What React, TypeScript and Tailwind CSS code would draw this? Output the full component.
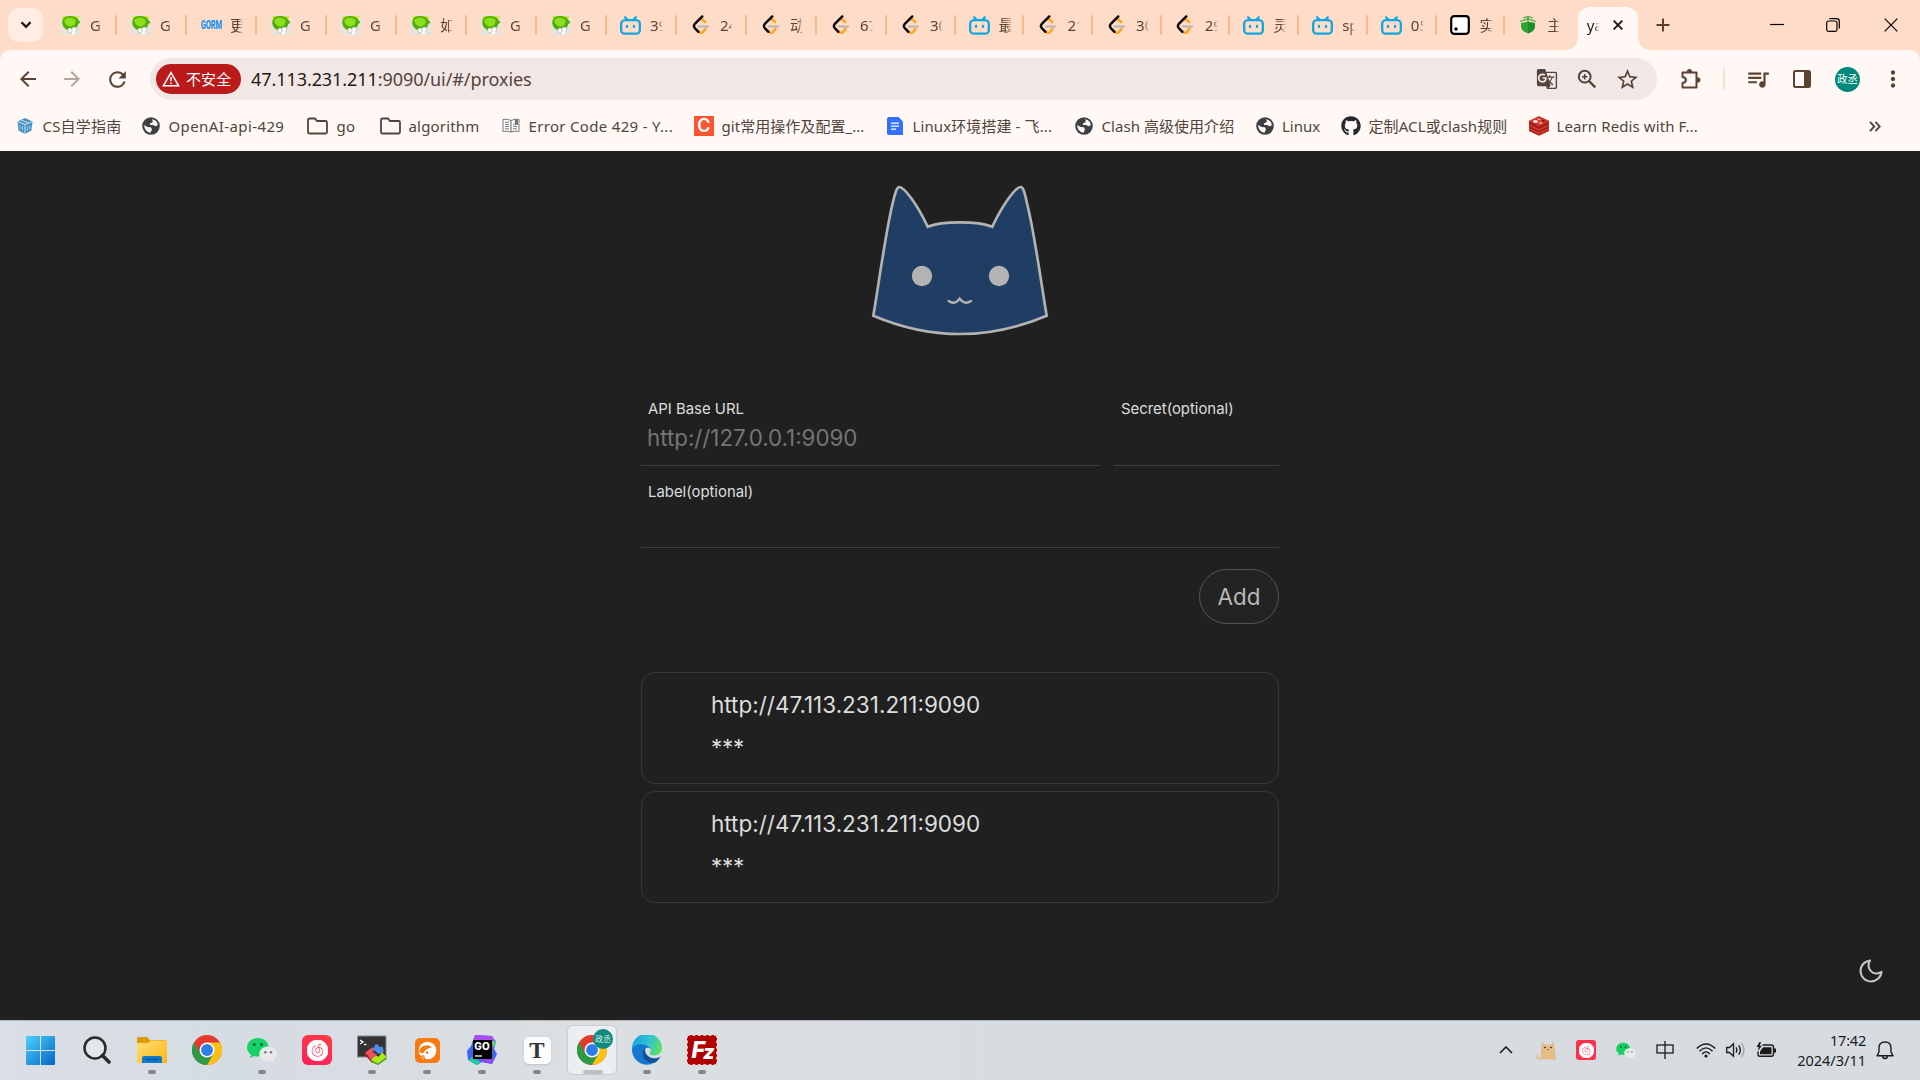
import type { ReactNode } from "react";
import { SiBilibili, SiNeteasecloudmusic } from "react-icons/si";
import { FaGithub } from "react-icons/fa";
import {
  MdGTranslate,
  MdOutlineQueueMusic,
  MdStarBorder,
  MdMoreVert,
  MdArrowBack,
  MdArrowForward,
  MdRefresh,
} from "react-icons/md";

/* ---------- favicons ---------- */

const Frog = () => (
  <svg viewBox="0 0 20 20" className="size-5 shrink-0">
    <rect width="20" height="20" fill="#e6e2dc" />
    <path d="M1 1 L19 1 L16 5 L3 5Z" fill="#e3e53a" />
    <path d="M2 4 Q4 .8 9.500 1 Q16 1.500 17.500 5 L19.500 7.500 L17.300 9 Q16 14.500 10 16 Q3 15 1.300 9 Q.8 6 2 4Z" fill="#4fae0c" />
    <path d="M3 5 Q9 0 14.500 5 Q15.500 10 10 11.500 Q4 11 3 5Z" fill="#8fe01c" />
    <circle cx="9" cy="15.300" r="2.300" fill="#fff" stroke="#9aa88e" strokeWidth=".5" />
    <circle cx="13.300" cy="14.500" r="2.500" fill="#fff" stroke="#9aa88e" strokeWidth=".5" />
    <circle cx="12.500" cy="17.800" r="1.700" fill="#fff" />
  </svg>
);

const Gorm = () => (
  <span className="block w-5 shrink-0 origin-left scale-x-[0.62] whitespace-nowrap font-['Roboto',sans-serif] text-[12px] font-black leading-5 tracking-[-0.2px] text-[#1e90f5]">
    GORM
  </span>
);

const Bili = () => <SiBilibili className="size-[21px] shrink-0 text-[#11a8e0]" />;

const Leet = () => (
  <svg viewBox="0 0 20 20" className="size-5 shrink-0" fill="none" strokeLinecap="round" strokeLinejoin="round">
    <path d="M14.500 13.800 L12.300 16.800 Q10.200 19 8 16.800 L6.500 15.300" stroke="#fca31c" strokeWidth="2.400" />
    <path d="M9.500 4.600 Q11 3.800 12.200 5.200 L14.200 7.200" stroke="#fca31c" strokeWidth="2.400" />
    <path d="M11.300 1.400 L3.600 9.200 Q2.200 11 3.600 12.800 L7.400 16.800" stroke="#0a0a0a" strokeWidth="2.400" />
    <path d="M8 11.500 H17" stroke="#b3b3b3" strokeWidth="2.200" />
  </svg>
);

const BoxDot = () => (
  <svg viewBox="0 0 20 20" className="size-5 shrink-0">
    <rect x="1.200" y="1.200" width="17.600" height="17.600" rx="3" fill="#fff" stroke="#000" strokeWidth="2.200" />
    <circle cx="6" cy="14" r="1.700" />
  </svg>
);

const Shield = () => (
  <svg viewBox="0 0 20 20" className="size-5 shrink-0">
    <path d="M3 8 L10 6.500 L17 8 V12 Q16 16.500 10 18.500 Q4 16.500 3 12Z" fill="#2fa52f" />
    <path d="M10 1 V7 M5 3 L10 1.500 L15 3 M2 6.500 L10 3.800 L18 6.500" stroke="#4dac45" strokeWidth="1.300" fill="none" />
    <path d="M10 7 L17 8 V12 Q16 16.500 10 18.500Z" fill="#1f8f2d" />
  </svg>
);

type TabData = [() => ReactNode, string];
const wideTabs: TabData[] = [
  [Frog, "G"], [Frog, "G"], [Gorm, "更"], [Frog, "G"], [Frog, "G"], [Frog, "如"],
  [Frog, "G"], [Frog, "G"], [Bili, "39"], [Leet, "24"], [Leet, "动"], [Leet, "67"],
];
const narrowTabs: TabData[] = [
  [Leet, "30"], [Bili, "最"], [Leet, "21"], [Leet, "30"], [Leet, "29"],
  [Bili, "灵"], [Bili, "sp"], [Bili, "05"], [BoxDot, "实"],
];

const tabLabel =
  "w-[13px] overflow-hidden whitespace-nowrap text-[15px] leading-5 text-[#5b4334] [mask-image:linear-gradient(to_right,#000_60%,transparent)]";

function Tab({ icon: Icon, label, narrow }: { icon: () => ReactNode; label: string; narrow?: boolean }) {
  return (
    <div className={`flex h-5 shrink-0 items-center pl-[13px] ${narrow ? "w-[68.7px]" : "w-[70px]"}`}>
      <span className="flex w-[21px] shrink-0 justify-center"><Icon /></span>
      <span className={`ml-[9px] ${tabLabel}`}>{label}</span>
      <span className="ml-auto h-5 w-[2px] shrink-0 rounded-full bg-[#ffb788]" />
    </div>
  );
}

function TabStrip() {
  return (
    <div className="flex h-[50px] items-center bg-[#ffdcc8]">
      <div className="ml-2 flex h-[34px] w-[35px] items-center justify-center rounded-[11px] bg-[#ffede3]">
        <svg viewBox="0 0 12 8" className="h-2 w-3" fill="none" stroke="#1d1410" strokeWidth="2.300">
          <path d="M1.500 1.200 L6 5.800 L10.500 1.200" />
        </svg>
      </div>
      <div className="ml-[4px] flex">
        {wideTabs.map(([I, l], i) => <Tab key={i} icon={I} label={l} />)}
        {narrowTabs.map(([I, l], i) => <Tab key={i} icon={I} label={l} narrow />)}
        <div className="flex h-5 w-[72.5px] items-center pl-[13px]">
          <Shield />
          <span className={`ml-[9px] ${tabLabel}`}>主</span>
        </div>
      </div>
      <div className="relative mt-[7px] flex h-[43px] w-[60.5px] items-center rounded-t-[12px] bg-[#fff8f5] pb-[7px] pl-[9px]">
        <span className="absolute -left-3 bottom-0 size-3 bg-[radial-gradient(circle_at_0_0,transparent_11.5px,#fff8f5_12px)]" />
        <span className="absolute -right-3 bottom-0 size-3 bg-[radial-gradient(circle_at_100%_0,transparent_11.5px,#fff8f5_12px)]" />
        <span className="w-[13px] overflow-hidden text-[15px] leading-5 text-[#1f1a17] [mask-image:linear-gradient(to_right,#000_50%,transparent)]">ya</span>
        <svg viewBox="0 0 10 10" className="ml-[13px] size-[10px]" stroke="#1d1410" strokeWidth="1.900">
          <path d="M.7 .7 L9.300 9.300 M9.300 .7 L.7 9.300" />
        </svg>
      </div>
      <svg viewBox="0 0 14 14" className="ml-[18px] size-[14px]" stroke="#5b4334" strokeWidth="2">
        <path d="M7 .5 V13.500 M.5 7 H13.500" />
      </svg>
      <div className="ml-auto flex items-center">
        <svg viewBox="0 0 14 14" className="mr-[42px] size-[14px]" stroke="#000" strokeWidth="1.200">
          <path d="M0 6.500 H14" />
        </svg>
        <svg viewBox="0 0 14 14" className="mr-[44px] size-[14px]" fill="none" stroke="#000" strokeWidth="1.200">
          <rect x=".7" y="3" width="10.300" height="10.300" rx="1.800" />
          <path d="M3.400 .7 H10.600 Q13.300 .7 13.300 3.400 V10.600" />
        </svg>
        <svg viewBox="0 0 14 14" className="mr-[22px] size-[14px]" stroke="#000" strokeWidth="1.200">
          <path d="M.7 .7 L13.300 13.300 M13.300 .7 L.7 13.300" />
        </svg>
      </div>
    </div>
  );
}

/* ---------- toolbar ---------- */

const ZoomIcon = () => (
  <svg viewBox="0 0 20 20" className="size-5 text-[#51443c]" fill="none" stroke="currentColor">
    <circle cx="7.700" cy="7.700" r="5.900" strokeWidth="2" />
    <path d="M12 12 L18.300 18.300" strokeWidth="2.400" />
    <path d="M7.700 5 V10.400 M5 7.700 H10.400" strokeWidth="1.600" />
  </svg>
);

const Puzzle = () => (
  <svg viewBox="0 0 22 22" className="size-[22px]">
    <path d="M2.500 4.500 H16.500 V19.500 H2.500 V15 Q6 14.500 6 12 Q6 9.500 2.500 9Z" fill="none" stroke="currentColor" strokeWidth="2" strokeLinejoin="round" />
    <path d="M6.800 4 Q7 1 9.500 1 Q12 1 12.200 4Z M17 9.300 Q20.500 9.500 20.500 12 Q20.500 14.500 17 14.700Z" fill="currentColor" />
  </svg>
);

function Toolbar() {
  return (
    <div className="bg-[#ffdcc8]">
      <div className="flex h-[58px] items-center rounded-t-[10px] bg-[#fff8f5] text-[#5b4334]">
        <MdArrowBack className="ml-[16px] size-6" />
        <MdArrowForward className="ml-[20px] size-6 text-[#b3a49c]" />
        <MdRefresh className="ml-[21px] size-[25px]" />
        <div className="ml-[20px] flex h-[42px] w-[1507px] items-center rounded-full bg-[#f2e7e4]">
          <div className="ml-[6px] flex h-[30px] w-[85px] items-center rounded-full bg-[#ba1a1a] text-white">
            <svg viewBox="0 0 18 16" className="ml-[6px] h-4 w-[18px]" fill="none" stroke="#fff" strokeWidth="1.500">
              <path d="M9 1.600 L16.600 14.800 H1.400Z" />
              <path d="M9 6 V10.300 M9 11.400 V13" />
            </svg>
            <span className="ml-[6px] whitespace-nowrap text-[15px] leading-5 tracking-[0.1px]">不安全</span>
          </div>
          <span className="ml-[10px] text-[18px] leading-6 tracking-[-0.070px] text-[#51443c]">
            <span className="text-[#1f1a17]">47.113.231.211</span>:9090/ui/#/proxies
          </span>
          <MdGTranslate className="ml-auto mr-[19px] size-[22px] text-[#51443c]" />
          <span className="mr-[18px]"><ZoomIcon /></span>
          <MdStarBorder className="mr-[17px] size-[25px] text-[#51443c]" />
        </div>
        <span className="ml-[23px]"><Puzzle /></span>
        <span className="ml-[21px] h-5 w-[2px] bg-[#ffdcc8]" />
        <MdOutlineQueueMusic className="ml-[20px] size-[26px]" />
        <svg viewBox="0 0 18 18" className="ml-[22px] size-[18px]">
          <rect x="1" y="1" width="16" height="16" rx="1.500" fill="none" stroke="currentColor" strokeWidth="2" />
          <rect x="11" y="1" width="6" height="16" fill="currentColor" />
        </svg>
        <span className="ml-[24px] flex size-[25px] items-center justify-center whitespace-nowrap rounded-full bg-[#00897b] text-[10.5px] leading-none text-white">
          政丞
        </span>
        <MdMoreVert className="ml-[20px] size-[26px]" />
      </div>
    </div>
  );
}

/* ---------- bookmarks ---------- */

const Globe = () => (
  <svg viewBox="0 0 18 18" className="size-[18px]">
    <circle cx="9" cy="9" r="8.800" fill="#3c4043" />
    <path d="M10 2.200 Q15.500 3.400 15.800 8.200 L13.300 9.300 L11.300 8 H8.200 L8 6.200 L10.300 5.600 L10.800 4Z" fill="#fff8f5" />
    <path d="M2.100 8 L5.500 10 L8.800 10.300 L10 12.200 L8.500 15.700 Q2.500 15 2.100 8Z" fill="#fff8f5" />
  </svg>
);
const Folder = () => (
  <svg viewBox="0 0 21 18" className="h-[18px] w-[21px] shrink-0">
    <path d="M1 3 Q1 1.500 2.500 1.500 H8 L10 4 H18.500 Q20 4 20 5.500 V15 Q20 16.500 18.500 16.500 H2.500 Q1 16.500 1 15Z" fill="none" stroke="#51443c" strokeWidth="1.800" />
  </svg>
);
const Cube = () => (
  <svg viewBox="0 0 16 18" className="h-[18px] w-4">
    <path d="M8 1 L15.500 4.500 L14.500 13.500 L8 17 L1.500 13.500 L.5 4.500Z" fill="#4b93c4" />
    <path d="M.8 4.700 L8 7.500 L15.200 4.700 M8 7.500 V17 M4 3 L11.500 6" stroke="#d4e8f4" strokeWidth=".9" fill="none" />
    <path d="M3 8.500 V12 M5.500 9.500 V13 M10.500 9.500 V13.500 M13 8.500 V12" stroke="#a5cfe6" strokeWidth="1" />
  </svg>
);
const Book = () => (
  <svg viewBox="0 0 18 16" className="h-4 w-[18px]" fill="#fff" stroke="#777" strokeWidth="1">
    <path d="M1 1.500 Q5 .5 9 2.500 V14 Q5 12.500 1 13.500Z" />
    <path d="M17 1.500 Q13 .5 9 2.500 V14 Q13 12.500 17 13.500Z" />
    <path d="M3 4.200 H7 M3 6.400 H7 M3 8.600 H7 M3 10.800 H7 M11 8.600 H15 M11 10.800 H15 M11 6.400 H12.500" />
    <path d="M13.300 2 V7 L14.500 6 L15.500 7 V2Z" fill="#666" />
  </svg>
);
const CIcon = () => (
  <span className="flex size-5 items-center justify-center bg-[#fc5531] font-['Inter',sans-serif] text-[18px] font-semibold leading-none text-white">C</span>
);
const Doc = () => (
  <svg viewBox="0 0 16 18" className="h-[18px] w-4">
    <path d="M2 0 H11.500 L16 4.500 V18 H2 Q0 18 0 16 V2 Q0 0 2 0Z" fill="#3370ff" />
    <path d="M4 6.200 H12 M4 9.200 H12 M4 12.200 H9" stroke="#fff" strokeWidth="1.300" />
  </svg>
);
const Redis = () => (
  <svg viewBox="0 0 20 20" className="size-5">
    <path d="M0 5 L10 .3 L20 5 V15 L10 19.700 L0 15Z" fill="#a3211b" />
    <path d="M0 12 L10 16.500 L20 12 V13.500 L10 18 L0 13.500Z" fill="#dc3a31" />
    <path d="M0 8.500 L10 13 L20 8.500 V10 L10 14.500 L0 10Z" fill="#dc3a31" />
    <path d="M0 5 L10 .3 L20 5 L10 10.300Z" fill="#d8352c" />
    <ellipse cx="6.500" cy="5.500" rx="2.500" ry="1.300" fill="#fff" />
    <path d="M8.500 2.500 L12 3.500 L9.500 4Z M10 7.800 L11.500 6 L13.500 7.200Z" fill="#fff" />
    <path d="M13.500 3.500 L16.500 5 L13.500 6Z" fill="#7a0c00" />
  </svg>
);
const Octo = () => <FaGithub className="size-5 text-[#24292f]" />;

const bookmarks: { icon: () => ReactNode; label: string; cls: string; t: string }[] = [
  { icon: Cube, label: "CS自学指南", cls: "w-[126px]", t: "tracking-[0.2px]" },
  { icon: Globe, label: "OpenAI-api-429", cls: "w-[166px]", t: "tracking-[0.4px]" },
  { icon: Folder, label: "go", cls: "w-[73px] gap-[10px]", t: "tracking-[0.2px]" },
  { icon: Folder, label: "algorithm", cls: "w-[121px] gap-[9px]", t: "tracking-[0.17px]" },
  { icon: Book, label: "Error Code 429 - Y...", cls: "w-[193px]", t: "tracking-[0.32px]" },
  { icon: CIcon, label: "git常用操作及配置_...", cls: "w-[191px]", t: "tracking-[0.05px]" },
  { icon: Doc, label: "Linux环境搭建 - 飞...", cls: "w-[189px]", t: "tracking-[0.1px]" },
  { icon: Globe, label: "Clash 高级使用介绍", cls: "w-[180.5px]", t: "tracking-[0.05px]" },
  { icon: Globe, label: "Linux", cls: "w-[86.5px]", t: "" },
  { icon: Octo, label: "定制ACL或clash规则", cls: "w-[188px]", t: "tracking-[0.1px]" },
  { icon: Redis, label: "Learn Redis with F...", cls: "w-[190px]", t: "tracking-[0.1px]" },
];

function Bookmarks() {
  return (
    <div className="flex h-[43px] items-center bg-[#fff8f5] pb-[7px] pl-[15px] pt-0 text-[15px] leading-5 text-[#51443c]">
      {bookmarks.map(({ icon: I, label, cls, t }) => (
        <div key={label} className={`flex shrink-0 items-center gap-2 ${cls}`}>
          <span className="flex w-5 shrink-0 items-center justify-center"><I /></span>
          <span className={`-ml-[0.5px] whitespace-nowrap ${t}`}>{label}</span>
        </div>
      ))}
      <svg viewBox="0 0 12 11" className="ml-auto mr-[39px] h-[11px] w-3" fill="none" stroke="#51443c" strokeWidth="1.900">
        <path d="M1 .8 L5.300 5.500 L1 10.200 M6.500 .8 L10.800 5.500 L6.500 10.200" />
      </svg>
    </div>
  );
}

/* ---------- page ---------- */

function CatLogo() {
  return (
    <svg viewBox="0 0 600 540" className="mt-[19px] h-[180px] w-[200px]">
      <path
        d="M40 437 C58 330 78 180 98 100 C107 62 111 51 118 51 C132 51 170 100 203 170 Q235 157 300 157 Q365 157 397 170 C430 100 468 51 482 51 C489 51 493 62 501 100 C522 180 542 330 560 437 Q430 492 300 492 Q170 492 40 437Z"
        fill="#203e63" stroke="#b3b3b3" strokeWidth="8"
      />
      <circle cx="186" cy="318" r="30.500" fill="#b3b3b3" />
      <circle cx="417" cy="318" r="30.500" fill="#b3b3b3" />
      <path d="M266 393 Q285 406 299 386 Q314 406 333 393" fill="none" stroke="#b3b3b3" strokeWidth="7" strokeLinecap="round" />
    </svg>
  );
}

function Field({ label, placeholder, className }: { label: string; placeholder?: string; className: string }) {
  return (
    <div className={`flex flex-col border-b border-[#3f3f3f] ${className}`}>
      <span className="ml-[7px] pt-px text-[14.9px] leading-5 text-[#dddddd]">{label}</span>
      <span className="ml-[6px] mt-[5px] h-7 text-[22.3px] leading-7 text-[#757575]">{placeholder}</span>
    </div>
  );
}

function Backend({ url }: { url: string }) {
  return (
    <div className="h-[112px] rounded-[14px] border border-[#363636] pl-[69px] pt-[18px] text-[22.5px] text-[#dddddd]">
      <div className="leading-[28px]">{url}</div>
      <div className="mt-[15px] leading-[28px] tracking-[-0.3px]">***</div>
    </div>
  );
}

function Page() {
  return (
    <main className="relative flex h-[869px] flex-col items-center bg-[#202020] font-['Inter',sans-serif]">
      <CatLogo />
      <div className="mt-[48px] w-[638px]">
        <div className="flex justify-between">
          <Field label="API Base URL" placeholder="http://127.0.0.1:9090" className="h-[68px] w-[459px]" />
          <Field label="Secret(optional)" className="h-[68px] w-[165px]" />
        </div>
        <Field label="Label(optional)" className="mt-[15px] h-[67px]" />
        <div className="mt-[21px] flex justify-end">
          <button className="h-[55px] w-20 rounded-full border border-[#555] bg-[#232323] pt-px text-[22.4px] leading-none text-[#b9b9b9]">Add</button>
        </div>
        <div className="mt-[48px] flex flex-col gap-[7px]">
          <Backend url="http://47.113.231.211:9090" />
          <Backend url="http://47.113.231.211:9090" />
        </div>
      </div>
      <svg viewBox="0 0 24 24" className="absolute bottom-[35px] right-[35px] size-[28px]" fill="none" stroke="#c4c4c4" strokeWidth="1.800" strokeLinecap="round" strokeLinejoin="round">
        <path d="M21 12.790A9 9 0 1 1 11.210 3 7 7 0 0 0 21 12.790z" />
      </svg>
    </main>
  );
}

/* ---------- taskbar icons ---------- */

const WinLogo = () => (
  <svg viewBox="0 0 29 29" className="size-[29px]">
    <defs>
      <linearGradient id="win" x1="0" y1="0" x2="1" y2="1">
        <stop offset="0" stopColor="#4fd0fb" />
        <stop offset="1" stopColor="#0067c8" />
      </linearGradient>
    </defs>
    <path d="M1 0 H14 V14 H0 V1 Q0 0 1 0Z M15 0 H28 Q29 0 29 1 V14 H15Z M0 15 H14 V29 H1 Q0 29 0 28Z M15 15 H29 V28 Q29 29 28 29 H15Z" fill="url(#win)" />
  </svg>
);
const Search = () => (
  <svg viewBox="0 0 28 28" className="size-7" fill="none" stroke="#2a2a2a">
    <circle cx="12" cy="12" r="10.500" strokeWidth="2.500" fill="#e3e7ea" />
    <path d="M19.500 19.500 L26 26" strokeWidth="3.600" strokeLinecap="round" />
  </svg>
);
const Explorer = () => (
  <svg viewBox="0 0 30 28" className="h-7 w-[30px]">
    <defs>
      <linearGradient id="fold" x1="0" y1="0" x2="1" y2="1">
        <stop offset="0" stopColor="#ffdf75" />
        <stop offset="1" stopColor="#fbb713" />
      </linearGradient>
    </defs>
    <path d="M0 2 Q0 1 1 1 H10 L13 4 H29 V8 H0Z" fill="#dc9b08" />
    <path d="M0 7 H11 L14 4.500 H29 Q30 4.500 30 5.500 V26 Q30 27 29 27 H1 Q0 27 0 26Z" fill="url(#fold)" />
    <path d="M5 27 V22 Q5 20 7 20 H23 Q25 20 25 22 V27Z" fill="#1178cb" />
    <path d="M9 23.500 H21" stroke="#0a4f94" strokeWidth="1.200" />
  </svg>
);
const Chrome = () => (
  <svg viewBox="0 0 48 48" className="size-[30px]">
    <circle cx="24" cy="24" r="24" fill="#e23b2e" />
    <path d="M3.200 12 A24 24 0 0 0 24 48 L34.400 30 L24 24 L13.600 30Z" fill="#2c9a46" />
    <path d="M44.800 12 A24 24 0 0 1 24 48 L34.400 30 L24 12Z" fill="#fbc116" />
    <circle cx="24" cy="24" r="12" fill="#fff" />
    <circle cx="24" cy="24" r="9.500" fill="#2f7de9" />
  </svg>
);
const WeChat = ({ small }: { small?: boolean }) => (
  <svg viewBox="0 0 30 26" className={small ? "h-[17px] w-5" : "h-[26px] w-[30px]"}>
    <path d="M11 1 C4.500 1 0 5 0 10.500 C0 13.500 1.500 16 4 17.700 L3 21 L7 19 Q9 19.600 11 19.600 C17 19.600 21.500 15.500 21.500 10.300 C21.500 5 17 1 11 1Z" fill="#17d066" />
    <circle cx="7.300" cy="7.500" r="1.500" fill="#0c6b37" />
    <circle cx="14.500" cy="7.500" r="1.500" fill="#0c6b37" />
    <path d="M21 9.500 C16 9.500 12.300 13 12.300 17 C12.300 21.300 16 24.500 21 24.500 Q23 24.500 24.500 24 L27.500 25.500 L27 22.800 Q30 20.500 30 17 C30 13 26 9.500 21 9.500Z" fill="#e9e9e9" />
    <circle cx="18.300" cy="15.300" r="1.200" fill="#777" />
    <circle cx="24" cy="15.300" r="1.200" fill="#777" />
  </svg>
);
const NetEase = ({ small }: { small?: boolean }) => (
  <span className={small ? "flex size-5 items-center justify-center rounded-[3px] bg-[#fe2f4a]" : "flex size-[30px] items-center justify-center rounded-[6px] bg-[linear-gradient(20deg,#ff1f5e,#fe3c41)]"}>
    <SiNeteasecloudmusic className={small ? "size-[15px] stroke-white stroke-[1.2px] text-white" : "size-[21px] stroke-white stroke-[1px] text-white"} />
  </span>
);
const Terminal = () => (
  <svg viewBox="0 0 30 30" className="size-[30px]">
    <rect x=".5" y="1" width="28.500" height="21" fill="#333" stroke="#8c8c8c" />
    <path d="M3 5 L6 7 L3 9" stroke="#fff" strokeWidth="1.300" fill="none" />
    <path d="M7 9.500 H9.500" stroke="#fff" strokeWidth="1.300" />
    <path d="M8 17.500 L15 12.500 L17.500 15 L15.500 17 L20 19.500 L15 25Z" fill="#f0525a" />
    <path d="M8 17.500 L15 25 V28 L8 20Z" fill="#b3262c" />
    <path d="M15 13 L18 12 L17.500 10 L21 9 L22 12 L25.500 11.500 L27 16.500 L22 19 L18 16Z" fill="#4b8ff0" />
    <path d="M14 25 L19 20.500 L21.500 22 L23 20 L25 17 L29.500 22 L21 28.500Z" fill="#a6ec19" />
    <path d="M14 25 L21 28.500 L29.500 22 V24 L21 30 L14 27Z" fill="#4d9a10" />
  </svg>
);
const OrangeApp = () => (
  <svg viewBox="0 0 25 25" className="size-[25px]">
    <rect width="25" height="25" rx="5" fill="#f97a10" />
    <circle cx="12.500" cy="12.500" r="8.800" fill="#fff" />
    <path d="M4 13.500 Q6 7 12.500 7.200 Q15 7.500 17 9.500 Q11 10 8.500 15 Q6 15.500 4 13.500Z" fill="#f97a10" />
    <path d="M10.500 14.500 L13 13 V16.500Z" fill="#e8690a" />
    <path d="M5 18 L9 17 L11.500 22 Q7 22 5 18Z" fill="#f97a10" />
    <path d="M7.500 17.500 L11 20.500 M6 19 L9 21.500" stroke="#fff" strokeWidth=".7" />
  </svg>
);
const GoLand = () => (
  <span className="relative flex size-[30px] items-center justify-center">
    <svg viewBox="0 0 30 30" className="absolute inset-0">
      <path d="M8 0 L25 1 L29 7 L27 14 L30 19 L25 29 L15 27 L10 30 L1 25 L0 16 L4 11Z" fill="#3f62ef" />
      <path d="M8 0 L25 1 L27 6 L5 9Z" fill="#b04af2" />
      <path d="M1 25 L5 22 L14 27 L10 30Z" fill="#25c99a" />
      <path d="M14 24 H25 L28 23 L25 29 L15 27Z" fill="#8e4bf0" />
      <path d="M25 6 L29 7 L26 13Z" fill="#6fe04a" />
      <rect x="6" y="5" width="19" height="19" fill="#000" />
      <path d="M8 21 H15" stroke="#fff" strokeWidth="1.300" />
    </svg>
    <span className="relative -mt-[8px] font-['Inter',sans-serif] text-[10px] font-extrabold leading-none text-white">GO</span>
  </span>
);
const Typora = () => (
  <span className="flex size-[27px] items-center justify-center rounded-[5px] bg-[#fcfcfc] font-['Liberation_Serif',serif] text-[23px] font-bold leading-none text-[#333] shadow-sm">T</span>
);
const Edge = () => (
  <svg viewBox="0 0 30 30" className="size-[30px]">
    <defs>
      <linearGradient id="edgeTop" x1="0" y1="0.300" x2="1" y2="0.600">
        <stop offset="0" stopColor="#1ba0e4" />
        <stop offset=".55" stopColor="#32c5ce" />
        <stop offset="1" stopColor="#5ee35a" />
      </linearGradient>
    </defs>
    <path d="M0 14 A15 15 0 0 1 30 13 C30 18 26 20.500 22 20.500 C18 20.500 17 19 18 17.500 C20 14 17 9.500 12 9.500 C7 9.500 2 12 0 17Z" fill="url(#edgeTop)" />
    <path d="M0 15 C1 11 6 9 11 9.300 C15 9.500 18 12 18.500 14 C15 11 11 14 11 19 C11 25 17 29 22 28 A15 15 0 0 1 0 15Z" fill="#1378cf" />
    <path d="M13.500 12.500 C10 15 9.500 21 13 25 C17 29 22 28.500 24 27 Q27.500 24.500 28.500 21.500 C26 23.500 21 24 17.500 22 C13.500 19.500 12.500 16 13.500 12.500Z" fill="#10519e" />
  </svg>
);
const FileZilla = () => (
  <span className="flex size-[30px] items-center justify-center border border-dashed border-[#e7b5b5] bg-[#b10000] font-['Inter',sans-serif] text-[23px] font-extrabold italic leading-none tracking-[-2px] text-white">
    <span>F</span><span className="mt-[4px] text-[20px]">z</span>
  </span>
);
const ActiveChrome = () => (
  <span className="relative flex size-12 items-center justify-center rounded-[5px] bg-[#eceff2] shadow-[0_0_1px_1px_rgba(0,0,0,0.08)]">
    <Chrome />
    <span className="absolute right-[3px] top-[3px] flex size-5 items-center justify-center whitespace-nowrap rounded-full bg-[#0f8a7d] text-[8px] leading-none text-[#c9ebe6]">政丞</span>
  </span>
);

const apps: { icon: () => ReactNode; run: "none" | "dot" | "active" }[] = [
  { icon: Explorer, run: "dot" },
  { icon: Chrome, run: "none" },
  { icon: () => <WeChat />, run: "dot" },
  { icon: () => <NetEase />, run: "none" },
  { icon: Terminal, run: "dot" },
  { icon: OrangeApp, run: "dot" },
  { icon: GoLand, run: "dot" },
  { icon: Typora, run: "dot" },
  { icon: ActiveChrome, run: "active" },
  { icon: Edge, run: "dot" },
  { icon: FileZilla, run: "dot" },
];

const TrayCat = () => (
  <svg viewBox="0 0 20 20" className="size-5">
    <path d="M6 1 L8 4.500 H15 L17.500 1 L20 19.500 H4Z" fill="#e3bd85" />
    <path d="M5 18.500 Q0 19.500 1 14.500" stroke="#e3bd85" strokeWidth="1.500" fill="none" />
    <path d="M9 7.500 h.1 M15 7.500 h.1" stroke="#222" strokeWidth="1.600" strokeLinecap="round" />
    <path d="M11 10 L12 9 L13 10" stroke="#8a6235" strokeWidth=".7" fill="none" />
  </svg>
);

function Taskbar() {
  return (
    <footer className="flex h-[60px] items-center border-t border-[#b4b8bb] bg-[linear-gradient(to_right,#d9dfe4,#d5dce2_12%,#dbdfe2_30%,#d6dbe0_60%,#d7dce0)] pb-px text-[#1b1b1b]">
      <div className="flex w-[124.5px] shrink-0 items-center pl-[26px]">
        <WinLogo />
        <span className="ml-[28px]"><Search /></span>
      </div>
      <div className="flex">
        {apps.map(({ icon: I, run }, i) => (
          <div key={i} className="relative flex h-12 w-[55px] items-center justify-center">
            <I />
            {run === "dot" && <span className="absolute bottom-0 left-[23.500px] h-1 w-2 rounded-full bg-[#84888b]" />}
            {run === "active" && <span className="absolute bottom-0 left-[18px] h-1 w-5 rounded-full bg-[#bdbfc1]" />}
          </div>
        ))}
      </div>
      <div className="ml-auto flex items-center">
        <svg viewBox="0 0 14 8" className="mr-[23px] h-2 w-[14px]" fill="none" stroke="currentColor" strokeWidth="1.600"><path d="M1 7 L7 1 L13 7" /></svg>
        <TrayCat />
        <span className="ml-[20px]"><NetEase small /></span>
        <span className="ml-[20px]"><WeChat small /></span>
        <svg viewBox="0 0 18 18" className="ml-[20px] size-[18px]" fill="none" stroke="currentColor" strokeWidth="1.300"><rect x="1" y="4" width="16" height="8" /><path d="M9 0 V18" /></svg>
        <svg viewBox="0 0 20 15" className="ml-[22px] h-[15px] w-5" fill="none" stroke="currentColor" strokeWidth="1.400">
          <path d="M.7 5.500 Q10 -3.500 19.300 5.500 M3.500 8.300 Q10 1.500 16.500 8.300 M6.200 11 Q10 6.700 13.800 11" />
          <circle cx="10" cy="13" r="1.600" fill="currentColor" stroke="none" />
        </svg>
        <svg viewBox="0 0 20 16" className="ml-[10px] h-4 w-5" fill="none" stroke="currentColor" strokeWidth="1.300">
          <path d="M.7 5.500 H3.500 L7.500 1.700 V14.300 L3.500 10.500 H.7Z" />
          <path d="M10 5.300 Q11.800 8 10 10.700 M12.700 3.300 Q16 8 12.700 12.700" />
          <path d="M15.500 1.200 Q20.500 8 15.500 14.800" stroke="#9ea2a5" />
        </svg>
        <svg viewBox="0 0 20 16" className="ml-[10px] h-4 w-5" fill="none" stroke="currentColor" strokeWidth="1.400">
          <path d="M6.500 3 H15.500 Q17.500 3 17.500 5 V12 Q17.500 14.200 15.500 14.200 H4 Q2 14.200 2 12 V9.500" />
          <path d="M7 5.200 H15.500 V12.200 H4 V9.500Z" fill="currentColor" stroke="none" />
          <path d="M18 6.500 H20 V10.500 H18Z" fill="currentColor" stroke="none" />
          <path d="M3.500 0 L.5 5 H2.800 L1.800 9 L6 3.800 H3.800 L5 0Z" fill="currentColor" stroke="none" />
        </svg>
        <div className="ml-[20px] w-[70px] text-right text-[14.500px] leading-5">
          <div className="tracking-[-0.200px]">17:42</div>
          <div>2024/3/11</div>
        </div>
        <svg viewBox="0 0 18 20" className="ml-[10px] mr-[26px] h-5 w-[18px]" fill="none" stroke="currentColor" strokeWidth="1.400" strokeLinejoin="round">
          <path d="M3 12 V8 Q3 2 9 2 Q15 2 15 8 V12 L17 15.800 H1Z" />
          <path d="M6.500 16 Q7 18.600 9 18.600 Q11 18.600 11.500 16" />
        </svg>
      </div>
    </footer>
  );
}

export default function App() {
  return (
    <div className="h-[1080px] w-[1920px] overflow-hidden font-['Noto_Sans','Noto_Sans_CJK_SC',sans-serif]">
      <TabStrip />
      <Toolbar />
      <Bookmarks />
      <Page />
      <Taskbar />
    </div>
  );
}
